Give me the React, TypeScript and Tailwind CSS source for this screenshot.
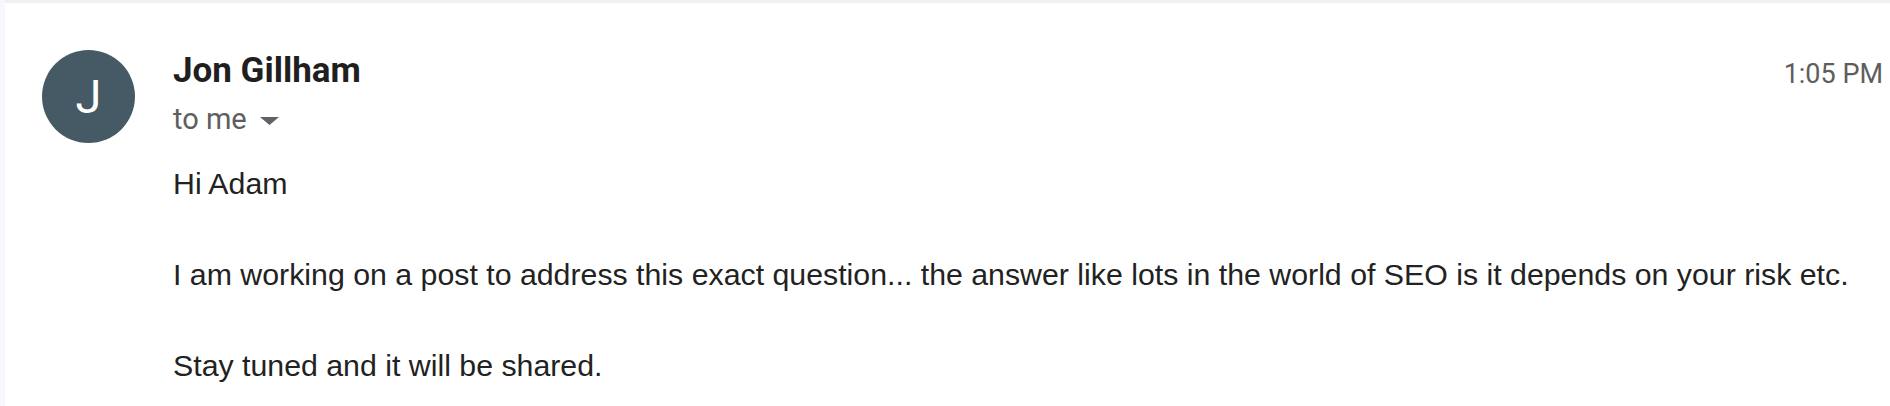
import { FC } from "react";

type Message = {
  sender: string;
  initial: string;
  recipient: string;
  time: string;
  lines: string[];
};

const message: Message = {
  sender: "Jon Gillham",
  initial: "J",
  recipient: "to me",
  time: "1:05 PM",
  lines: [
    "Hi Adam",
    "I am working on a post to address this exact question... the answer like lots in the world of SEO is it depends on your risk etc.",
    "Stay tuned and it will be shared.",
  ],
};

const Avatar: FC<{ letter: string }> = ({ letter }) => (
  <div className="flex h-[93px] w-[93px] shrink-0 items-center justify-center rounded-full bg-[#465a65] font-['Roboto',sans-serif] text-[47px] font-normal leading-none text-white">
    {letter}
  </div>
);

const CaretDown = () => (
  <svg width="19" height="8" viewBox="0 0 19 8" className="ml-[13px] mt-[4px]">
    <path d="M0 0h19L9.5 8z" fill="#5f6368" />
  </svg>
);

export default function App() {
  return (
    <div className="flex h-[406px] w-[1890px] overflow-hidden bg-white">
      <div className="w-[5px] shrink-0 bg-[#f6f8fc]" />
      <div className="flex flex-1 border-t-[3px] border-[#f1f1f1]">
        <div className="pl-[37px] pt-[47px]">
          <Avatar letter={message.initial} />
        </div>
        <div className="flex flex-1 flex-col pl-[38px] pr-[7px] pt-[46px]">
          <div className="flex items-start justify-between">
            <div className="flex flex-col">
              <span className="font-['Roboto',sans-serif] text-[35px] font-bold leading-[44px] text-[#1f1f1f]">
                {message.sender}
              </span>
              <div className="mt-[8px] flex items-center font-['Roboto',sans-serif] text-[29px] leading-[36px] text-[#5e5e5e]">
                <span>{message.recipient}</span>
                <CaretDown />
              </div>
            </div>
            <span className="pt-[7px] font-['Roboto',sans-serif] text-[27px] leading-[36px] text-[#5e5e5e]">
              {message.time}
            </span>
          </div>
          <div className="mt-[30px] flex flex-col gap-[57px] font-['Liberation_Sans',Arial,sans-serif] text-[30.3px] leading-[34px] text-[#222222]">
            {message.lines.map((line) => (
              <p key={line}>{line}</p>
            ))}
          </div>
        </div>
      </div>
    </div>
  );
}
